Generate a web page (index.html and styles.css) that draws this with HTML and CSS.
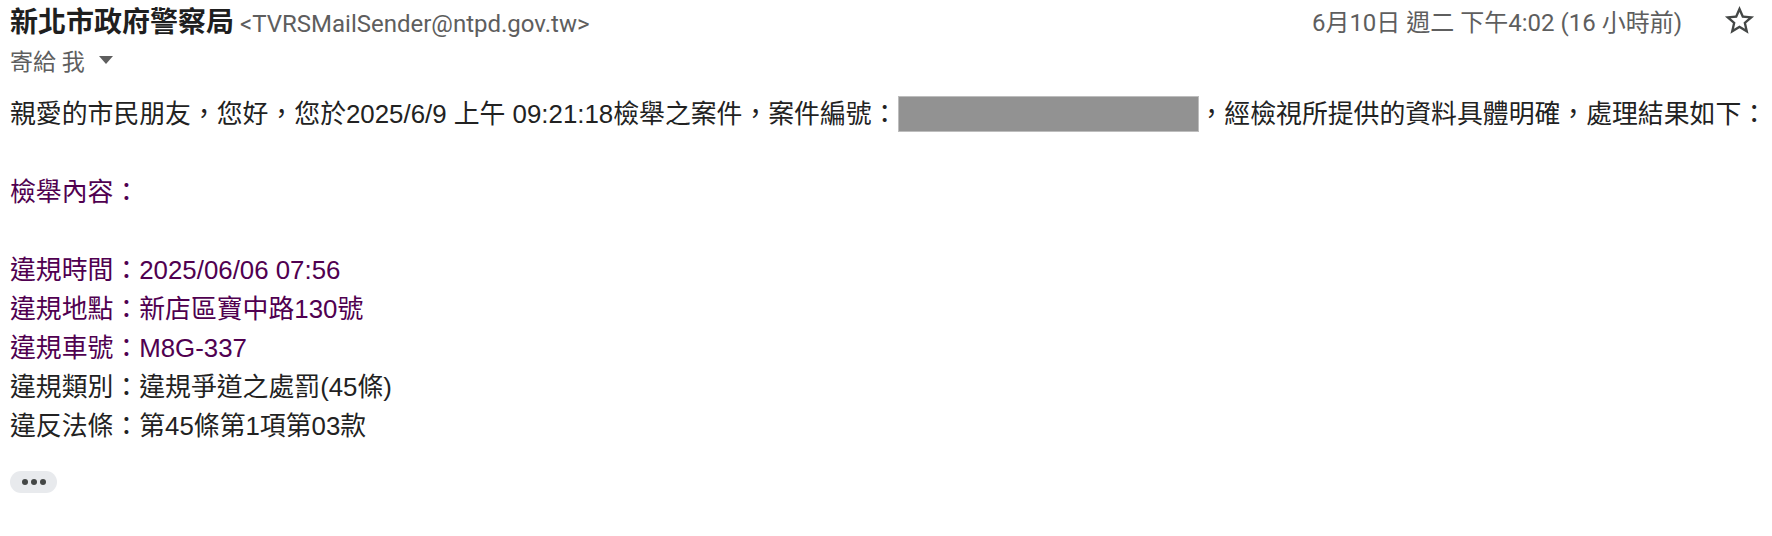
FILE: index.html
```html
<!DOCTYPE html>
<html lang="zh-Hant">
<head>
<meta charset="utf-8">
<title>新北市政府警察局</title>
<link rel="stylesheet" href="styles.css">
</head>
<body>
<div class="mail">
  <div class="head">
    <div class="from">
      <span class="name">新北市政府警察局</span>
      <span class="addr">&lt;TVRSMailSender@ntpd.gov.tw&gt;</span>
    </div>
    <div class="meta">
      <span class="date">6月10日 週二 下午4:02 (16 小時前)</span>
      <svg class="star" viewBox="0 0 24 24" width="35" height="35" aria-hidden="true"><path d="M22 9.24l-7.19-.62L12 2 9.19 8.63 2 9.24l5.46 4.73L5.82 21 12 17.27 18.18 21l-1.63-7.03L22 9.24zM12 15.4l-3.76 2.27 1-4.28-3.32-2.88 4.38-.38L12 6.1l1.71 4.04 4.38.38-3.32 2.88 1 4.28L12 15.4z"/></svg>
    </div>
  </div>
  <div class="to">
    <span>寄給 我</span>
    <svg class="caret" viewBox="0 0 14 8" width="14" height="8" aria-hidden="true"><polygon points="0,0 14,0 7,8"/></svg>
  </div>
  <div class="body">
    <div class="greet">親愛的市民朋友，您好，您於2025/6/9 上午 09:21:18檢舉之案件，案件編號：<span class="redact"></span>，經檢視所提供的資料具體明確，處理結果如下：</div>
    <div class="line purple heading">檢舉內容：</div>
    <div class="line purple">違規時間：2025/06/06 07:56</div>
    <div class="line purple">違規地點：新店區寶中路130號</div>
    <div class="line purple">違規車號：M8G-337</div>
    <div class="line">違規類別：違規爭道之處罰(45條)</div>
    <div class="line">違反法條：第45條第1項第03款</div>
  </div>
  <div class="more"><span class="dot"></span><span class="dot"></span><span class="dot"></span></div>
</div>
</body>
</html>
```

FILE: styles.css
```css
html, body {
  margin: 0;
  padding: 0;
  background: #ffffff;
}

.mail {
  padding: 0 15px 0 10px;
  font-family: Roboto, "Noto Sans CJK TC", sans-serif;
}

.head {
  display: flex;
  align-items: center;
  justify-content: space-between;
  height: 40px;
}

.from {
  display: flex;
  align-items: baseline;
  gap: 6px;
}

.name {
  font-size: 28px;
  font-weight: 700;
  color: #1f1f1f;
}

.addr {
  font-size: 24px;
  color: #5e5e5e;
}

.meta {
  display: flex;
  align-items: center;
  gap: 40px;
}

.date {
  font-size: 24px;
  color: #5e5e5e;
}

.star {
  fill: #444746;
  display: block;
}

.to {
  display: flex;
  align-items: center;
  gap: 14px;
  height: 36px;
  margin-top: 2px;
  font-size: 23px;
  color: #5e5e5e;
}

.caret {
  fill: #5e5e5e;
  display: block;
}

.body {
  margin-top: 17px;
  font-family: "Liberation Sans", Arial, "Noto Sans CJK TC", sans-serif;
  font-size: 25.85px;
  line-height: 39px;
  color: #222222;
}

.greet {
  margin-bottom: 39px;
  white-space: nowrap;
}

.line {
  white-space: nowrap;
}

.purple {
  color: #500050;
}

.heading {
  margin-bottom: 39px;
}

.redact {
  display: inline-block;
  width: 299px;
  height: 34px;
  background: #929292;
  border: 1px solid #bdbdbd;
  vertical-align: -9px;
}

.more {
  display: flex;
  align-items: center;
  justify-content: center;
  gap: 3px;
  width: 47px;
  height: 22px;
  margin-top: 25px;
  border-radius: 11px;
  background: #e8eaed;
}

.dot {
  width: 6px;
  height: 6px;
  border-radius: 50%;
  background: #444746;
}
```
